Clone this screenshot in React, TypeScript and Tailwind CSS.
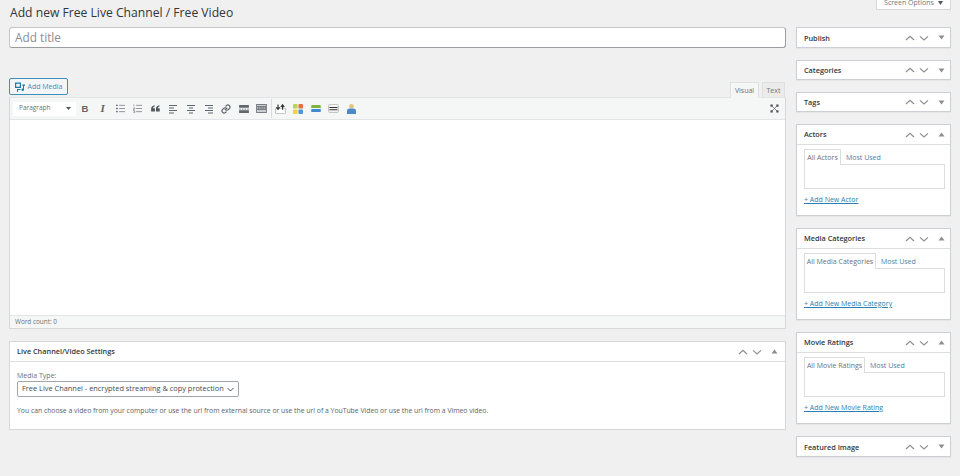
import { ReactNode } from "react";

const font = "font-['Open_Sans','Liberation_Sans',sans-serif]";

function Arrows({ open }: { open: boolean }) {
  return (
    <div className="ml-auto flex items-center">
      <svg width="10" height="10" viewBox="0 0 10 10" className="mr-[4px]" fill="none" stroke="#8a8f94" strokeWidth="1.2">
        <path d="M1 7 L5 3.400 L9 7" />
      </svg>
      <svg width="10" height="10" viewBox="0 0 10 10" className="mr-[9px]" fill="none" stroke="#8a8f94" strokeWidth="1.2">
        <path d="M1 3.400 L5 7 L9 3.400" />
      </svg>
      <svg width="7" height="5" viewBox="0 0 7 5" className="mr-[5px]" fill="#8a8f94">
        {open ? <path d="M3.500 0.500 L6.500 4.500 L0.500 4.500 Z" /> : <path d="M0.500 0.500 L6.500 0.500 L3.500 4.500 Z" />}
      </svg>
    </div>
  );
}

function ClosedBox({ title, h = "h-[20px]" }: { title: string; h?: string }) {
  return (
    <div className={`${h} flex items-center bg-white border border-[#ccd0d4] shadow-[0_1px_1px_rgba(0,0,0,0.04)] pl-[7px]`}>
      <span className="pt-[2px] text-[7.3px] leading-none font-semibold text-[#32373c]">{title}</span>
      <Arrows open={false} />
    </div>
  );
}

function TaxBox({ title, tab, add, tabW }: { title: string; tab: string; add: string; tabW: string }) {
  return (
    <div className="h-[92px] bg-white border border-[#ccd0d4] shadow-[0_1px_1px_rgba(0,0,0,0.04)]">
      <div className="h-[20px] flex items-center pl-[7px] border-b border-[#dcdee0]">
        <span className="pt-[1px] text-[7.3px] leading-none font-semibold text-[#32373c]">{title}</span>
        <Arrows open />
      </div>
      <div className="pl-[7px] pr-[5px] pt-[4px]">
        <div className="flex h-[16px] items-stretch">
          <div className={`${tabW} relative z-10 h-[16px] flex items-center justify-center bg-white border border-[#dddddd] border-b-0 text-[7px] leading-none text-[#6b7278]`}>{tab}</div>
          <div className="pl-[5px] flex items-center text-[7px] leading-none text-[#4a83a8]">Most Used</div>
        </div>
        <div className="h-[25px] -mt-px border border-[#dddddd] bg-white" />
        <div className="mt-[6px] text-[7px] leading-[10px] text-[#2a7fb0] underline">{add}</div>
      </div>
    </div>
  );
}

function Tool({ children }: { children: ReactNode }) {
  return <div className="w-[17.7px] h-[14px] flex items-center justify-center">{children}</div>;
}

function Lines({ kind }: { kind: "left" | "center" | "right" }) {
  const rows = {
    left: "M1 1.500h8M1 4h5M1 6.500h8M1 9h5",
    center: "M1 1.500h8M3 4h4M1 6.500h8M3 9h4",
    right: "M1 1.500h8M4 4h5M1 6.500h8M4 9h5",
  };
  return (
    <svg width="10" height="10" viewBox="0 0 10 10" stroke="#5f666c" strokeWidth="1">
      <path d={rows[kind]} />
    </svg>
  );
}

function Toolbar() {
  return (
    <div className="h-[22px] flex items-center pl-[3px] bg-[#f5f6f6] border-b border-[#e2e4e7]">
      <div className="w-[63px] h-[14px] flex items-center justify-between pl-[6px] pr-[5px] bg-white text-[6.5px] leading-none text-[#6b7278]">
        <span>Paragraph</span>
        <svg width="5" height="3" viewBox="0 0 5 3" fill="#50575e"><path d="M0 0h5L2.500 3z" /></svg>
      </div>
      <div className="flex items-center">
        <Tool><span className="font-['Liberation_Sans'] text-[9.500px] font-bold leading-none text-[#5f666c]">B</span></Tool>
        <Tool><span className="font-['Liberation_Serif'] text-[11px] italic font-bold leading-none text-[#5f666c]">I</span></Tool>
        <Tool>
          <svg width="9" height="9" viewBox="0 0 10 10" stroke="#6b7278">
            <path d="M0 1.500h2M0 5h2M0 8.500h2" strokeWidth="1.500" />
            <path d="M3.500 1.500H10M3.500 5H10M3.500 8.500H10" strokeWidth="0.800" />
          </svg>
        </Tool>
        <Tool>
          <svg width="9" height="9" viewBox="0 0 10 10" stroke="#6b7278" strokeWidth="0.800">
            <path d="M1 0.500v2M0.500 4.500h1.500v1H0.500v1.500h1.500M0.500 8h1.500v1.500H0.500" strokeWidth="0.700" fill="none" />
            <path d="M3.500 1.500H10M3.500 5H10M3.500 8.500H10" />
          </svg>
        </Tool>
        <Tool>
          <svg width="9" height="7" viewBox="0 0 10 8" fill="#50575e">
            <path d="M0 7.500V4.500C0 2 1.500 0.500 4 0.200v1.500C2.800 2 2.200 2.800 2.100 3.700H4.300V7.500zM5.500 7.500V4.500C5.500 2 7 0.500 9.500 0.200v1.500C8.300 2 7.700 2.800 7.600 3.700h2.200V7.500z" />
          </svg>
        </Tool>
        <Tool><Lines kind="left" /></Tool>
        <Tool><Lines kind="center" /></Tool>
        <Tool><Lines kind="right" /></Tool>
        <Tool>
          <svg width="10" height="10" viewBox="0 0 24 24" fill="none" stroke="#5f666c" strokeWidth="3" strokeLinecap="round" strokeLinejoin="round">
            <path d="M10 13a5 5 0 0 0 7.500.5l3-3a5 5 0 0 0-7-7l-1.700 1.700" />
            <path d="M14 11a5 5 0 0 0-7.500-.5l-3 3a5 5 0 0 0 7 7l1.700-1.700" />
          </svg>
        </Tool>
        <Tool>
          <svg width="10" height="8" viewBox="0 0 11 9" fill="#5f666c">
            <path d="M0 0h11v3H0zM0 6h11v3H0z" />
            <path d="M0 4.200h2v.8H0zM3 4.200h2v.8H3zM6 4.200h2v.8H6zM9 4.200h2v.8H9z" />
          </svg>
        </Tool>
        <Tool>
          <svg width="11" height="9" viewBox="0 0 12 10" fill="#777d83">
            <path d="M0 0h12v10H0z" />
            <path d="M1 1h10v1H1zM1 4h1v1H1zM3 4h1v1H3zM5 4h1v1H5zM7 4h1v1H7zM9 4h1v1H9zM1 7h10v1.500H1z" fill="#e8e8e8" />
          </svg>
        </Tool>
        <div className="w-px h-[19px] bg-[#dcdcde]" />
        <Tool>
          <svg width="11" height="10" viewBox="0 0 13 12">
            <rect x="0.500" y="5" width="12" height="6.500" rx="1" fill="#fff" stroke="#b5b5b5" />
            <path d="M3.500 0.500v6M1.500 4l2 2.500L5.500 4M9 7V1M7 3.500L9 1l2 2.500" stroke="#333" strokeWidth="1.400" fill="none" />
          </svg>
        </Tool>
        <Tool>
          <svg width="10" height="10" viewBox="0 0 11 11">
            <rect x="0" y="0" width="5" height="5" rx="1" fill="#b5d35a" />
            <rect x="6" y="0" width="5" height="5" rx="1" fill="#e4703f" />
            <rect x="0" y="6" width="5" height="5" rx="1" fill="#f0cf4a" />
            <rect x="6" y="6" width="5" height="5" rx="1" fill="#4a98d9" />
          </svg>
        </Tool>
        <Tool>
          <svg width="10" height="7" viewBox="0 0 11 8">
            <rect x="0" y="0" width="11" height="3.500" rx="1" fill="#7fb53c" />
            <rect x="0" y="4.500" width="11" height="3.500" rx="1" fill="#3f8bd0" />
          </svg>
        </Tool>
        <Tool>
          <svg width="11" height="9" viewBox="0 0 12 10">
            <rect x="0.500" y="0.500" width="11" height="9" rx="1.500" fill="#f4f4f4" stroke="#bdbdbd" />
            <path d="M1.500 3.800h9M1.500 6.300h9" stroke="#333" strokeWidth="1.200" />
          </svg>
        </Tool>
        <Tool>
          <svg width="9" height="11" viewBox="0 0 10 12">
            <circle cx="5" cy="3.500" r="2.600" fill="#e3c47a" />
            <path d="M0 12V8.500C0 7 1.500 6 3 6h4c1.500 0 3 1 3 2.500V12z" fill="#4d88c8" />
          </svg>
        </Tool>
      </div>
      <div className="ml-auto mr-[6px]">
        <svg width="9" height="9" viewBox="0 0 10 10" stroke="#666c72" strokeWidth="0.900" fill="#50575e">
          <path d="M2 2l6 6M8 2L2 8" />
          <rect x="0.500" y="0.500" width="2.500" height="2.500" stroke="none" />
          <rect x="7" y="0.500" width="2.500" height="2.500" stroke="none" />
          <rect x="0.500" y="7" width="2.500" height="2.500" stroke="none" />
          <rect x="7" y="7" width="2.500" height="2.500" stroke="none" />
        </svg>
      </div>
    </div>
  );
}

export default function App() {
  return (
    <div className={`${font} h-[476px] w-[960px] overflow-hidden bg-[#f0f0f0] flex pl-[9px] gap-[10px]`}>
      {/* main column */}
      <div className="w-[777px]">
        <h1 className="pl-[1px] pt-[5px] h-[27px] text-[12.150px] leading-[16px] text-[#32373c]">Add new Free Live Channel / Free Video</h1>
        <div className="h-[21px] flex items-center pl-[5px] pt-[1px] bg-white border border-[#c3c5c8] border-b-[#9a9ea3] border-r-[#9a9ea3] rounded-[3px] text-[11.800px] leading-none text-[#8a8f94]">Add title</div>

        <div className="mt-[30px] h-[19px] flex items-end justify-between">
          <div className="h-[17px] mb-[2px] w-[59px] flex items-center justify-center gap-[3px] bg-[#f3f5f6] border border-[#3d8fbc] rounded-[2px] text-[7px] leading-none text-[#4a8db5]">
            <svg width="10" height="10" viewBox="0 0 10 10" fill="#1f7aa8">
              <path d="M0 0.500h6v5.500H0zM1.200 1.700v3.100h3.600V1.700z" />
              <path d="M7.200 2.500H10v1.200H9v4a1.300 1.300 0 1 1-1-1.200V3.700h-.8zM2 7h3.500v1H3v2H2z" />
            </svg>
            <span>Add Media</span>
          </div>
          <div className="flex gap-[3px] pr-[1px]">
            <div className="relative z-10 -mb-px w-[29px] h-[16px] flex items-center justify-center bg-[#f5f6f6] border border-[#e0e0e0] border-b-0 text-[7px] leading-none text-[#6b7278]">Visual</div>
            <div className="w-[23px] h-[15px] flex items-center justify-center bg-[#ebebeb] border border-[#e0e0e0] border-b-0 text-[7px] leading-none text-[#72777c]">Text</div>
          </div>
        </div>

        <div className="h-[232px] flex flex-col border border-[#d5d7da] border-t-[#e2e4e7] bg-white">
          <Toolbar />
          <div className="flex-1" />
          <div className="h-[13px] flex items-center pl-[5px] bg-[#f5f6f6] border-t border-[#e2e4e7] text-[6.400px] leading-none text-[#6b7278]">Word count: 0</div>
        </div>

        <div className="mt-[12px] h-[89px] bg-white border border-[#d5d7da]">
          <div className="h-[20px] flex items-center pl-[7px] pr-[2px] border-b border-[#dcdee0]">
            <span className="text-[7.300px] leading-none font-semibold text-[#32373c]">Live Channel/Video Settings</span>
            <Arrows open />
          </div>
          <div className="pl-[7px] pt-[9px]">
            <div className="text-[7px] leading-[10px] text-[#6b7278]">Media Type:</div>
            <div className="w-[222px] h-[16px] flex items-center justify-between pl-[4px] pr-[4px] border border-[#a0a5aa] rounded-[2px] bg-white text-[7.400px] leading-none text-[#444b52]">
              <span className="whitespace-nowrap">Free Live Channel - encrypted streaming &amp; copy protection</span>
              <svg width="7" height="5" viewBox="0 0 7 5" fill="none" stroke="#444b52" strokeWidth="1"><path d="M0.500 1l3 3 3-3" /></svg>
            </div>
            <p className="mt-[9px] text-[6.830px] leading-[10px] whitespace-nowrap text-[#5c6369]">You can choose a video from your computer or use the url from external source or use the url of a YouTube Video or use the url from a Vimeo video.</p>
          </div>
        </div>
      </div>

      {/* sidebar */}
      <div className="w-[155px] flex flex-col">
        <div className="self-end h-[10px] w-[75px] mb-[17px] flex items-end justify-center gap-[4px] pb-[3px] bg-white border border-t-0 border-[#d5d7da] text-[7px] leading-none text-[#72777c] overflow-hidden">
          <span>Screen Options</span>
          <svg width="5" height="4" viewBox="0 0 5 4" className="mb-[1px]" fill="#50575e"><path d="M0 0h5L2.500 4z" /></svg>
        </div>
        <div className="flex flex-col gap-[12px]">
          <ClosedBox title="Publish" h="h-[21px]" />
          <ClosedBox title="Categories" />
          <ClosedBox title="Tags" />
          <TaxBox title="Actors" tab="All Actors" tabW="w-[37px]" add="+ Add New Actor" />
          <TaxBox title="Media Categories" tab="All Media Categories" tabW="w-[72px]" add="+ Add New Media Category" />
          <TaxBox title="Movie Ratings" tab="All Movie Ratings" tabW="w-[61px]" add="+ Add New Movie Rating" />
          <ClosedBox title="Featured Image" h="h-[21px]" />
        </div>
      </div>
    </div>
  );
}
